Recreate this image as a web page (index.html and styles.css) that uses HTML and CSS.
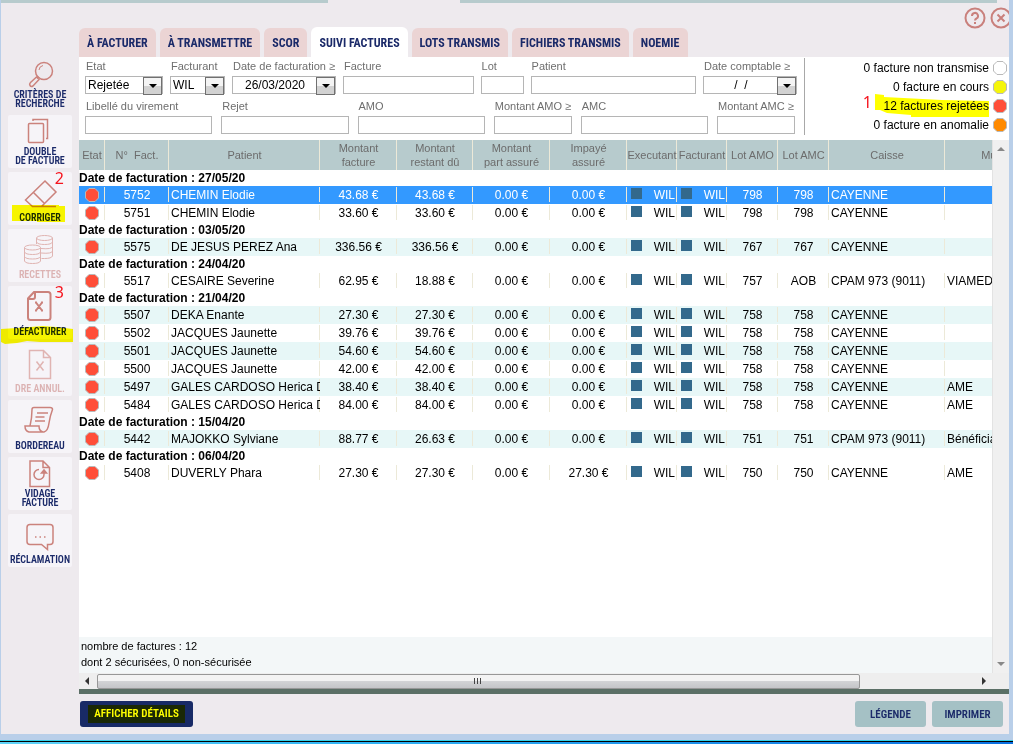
FILE: index.html
```html
<!DOCTYPE html>
<html lang="fr">
<head>
    <meta charset="UTF-8">
    <meta name="viewport" content="width=device-width, initial-scale=1.0">
    <title>Suivi factures</title>
    <link rel="stylesheet" href="styles.css">
</head>
<body>
    <!-- Pastille d'état -->
    <svg class="defs" width="0" height="0">
        <symbol id="pastille" viewBox="0 0 14 14">
            <path d="M4 .5h6L13.500 4v6L10 13.500H4L.5 10V4z" stroke="#b9b9b9" stroke-width="1"/>
        </symbol>
    </svg>

    <div class="window">
        <div class="top-strip"><span class="strip-left"></span><span class="strip-right"></span></div>

        <div class="header">
            <nav class="tabs">
                <button class="tab">À FACTURER</button>
                <button class="tab">À TRANSMETTRE</button>
                <button class="tab">SCOR</button>
                <button class="tab active">SUIVI FACTURES</button>
                <button class="tab">LOTS TRANSMIS</button>
                <button class="tab">FICHIERS TRANSMIS</button>
                <button class="tab">NOEMIE</button>
            </nav>
            <div class="window-actions">
                <button class="round-btn" aria-label="Aide">
                    <svg width="22" height="22" viewBox="0 0 22 22"><circle cx="11" cy="11" r="9.500"/><path d="M8 9a3 3 0 1 1 4.500 2.500Q11 12.300 11 13.500M11 15v2"/></svg>
                </button>
                <button class="round-btn" aria-label="Fermer">
                    <svg width="22" height="22" viewBox="0 0 22 22"><circle cx="11" cy="11" r="9.500"/><path d="M7.500 7.500l7 7M14.500 7.500l-7 7"/></svg>
                </button>
            </div>
        </div>

        <div class="main">
            <!-- MENU LATERAL -->
            <aside class="sidebar">
                <button class="side-btn plain">
                    <svg viewBox="0 0 64 32"><circle cx="36" cy="13" r="8.500"/><path d="M31 12a5 5 0 0 1 4-4.500" stroke-width="1"/><path d="M29.500 18.500l1.500 1.500M28.500 19l2.500 2.500-6 6.500q-2 1-3-.5t.5-3z"/></svg>
                    <span>CRITÈRES DE<br>RECHERCHE</span>
                </button>
                <button class="side-btn">
                    <svg viewBox="0 0 64 32"><rect x="20.500" y="8.500" width="15" height="19" rx="1"/><path d="M25 6V4.500h14.500v19H38"/></svg>
                    <span>DOUBLE<br>DE FACTURE</span>
                </button>
                <button class="side-btn">
                    <svg viewBox="0 0 64 32"><path d="M37 4l11 11-14.500 14.500h-9L17.500 23zM25.500 15.500l11 11M24 29.500h24"/></svg>
                    <span>CORRIGER</span>
                    <svg class="mark mark-corriger" viewBox="0 0 53 18"><path d="M0 0h47v1h6v16H25v-1H0z"/></svg>
                    <b class="note">2</b>
                </button>
                <button class="side-btn disabled">
                    <svg viewBox="0 0 64 32"><g stroke-width="1"><ellipse cx="36.500" cy="4" rx="8" ry="2.500"/><path d="M28.500 4v6M44.500 4v18q-1 2.500-8 2.500h-3M28.500 8q1 2.500 8 2.500t8-2.500M33 14.500q11 1 11.500-2M33 19q11 1 11.500-2"/><ellipse cx="24.500" cy="13.500" rx="8" ry="2.500"/><path d="M16.500 13.500V27q1 2.500 8 2.500t8-2.500V13.500M16.500 18q1 2.500 8 2.500t8-2.500M16.500 22.500q1 2.500 8 2.500t8-2.500"/></g></svg>
                    <span>RECETTES</span>
                </button>
                <button class="side-btn">
                    <svg viewBox="0 0 64 32"><path stroke-width="2" d="M26 1h14q2.500 0 2.500 2.500v23q0 2.500-2.500 2.500H22.500Q20 29 20 26.500V7.500zM27 1v5q0 2-2 2h-5"/><path stroke-width="2" d="M28 11.500l6 8M34 11.500l-6 8M27 11.500h2M33 11.500h2M27 19.500h2M33 19.500h2"/></svg>
                    <span>DÉFACTURER</span>
                    <svg class="mark mark-defacturer" viewBox="0 0 72 18"><path d="M0 3l16-1 26-2 13 1 17 2v13H39l-13-1-10 2-12 1-4-2z"/></svg>
                    <b class="note">3</b>
                </button>
                <button class="side-btn disabled">
                    <svg viewBox="0 0 64 32"><path d="M21.500 2.500h14l7 7v21h-21zM35.500 2.500v7h7M28.500 13.500l7 9M35.500 13.500l-7 9"/></svg>
                    <span>DRE ANNUL.</span>
                </button>
                <button class="side-btn">
                    <svg viewBox="0 0 64 32"><path d="M24 4.500q0-2 2-2h16q2.500 0 2.500 2Q42 11 41 18q-1 8-5 9H21q-4-1-4-6h14q0 5 4 6M24 4.500q0 8-2 16.500M29 8h11M27.500 12h9M27 16h10"/></svg>
                    <span>BORDEREAU</span>
                </button>
                <button class="side-btn">
                    <svg viewBox="0 0 64 32"><path d="M22 4h13l6.500 6.500V29.500H22zM35 4v6.500h6.500"/><path d="M31 12.500a5 5 0 1 0 5 5V14M33.500 16l2.500-3 2.500 3z"/></svg>
                    <span>VIDAGE<br>FACTURE</span>
                </button>
                <button class="side-btn">
                    <svg viewBox="0 0 64 32"><path d="M22 5.500h20q3 0 3 3v14q0 3-3 3h-2.500v5l-6-5H22q-3 0-3-3v-14q0-3 3-3z"/><path d="M27 18h1.500M31.500 18H33M36 18h1.500"/></svg>
                    <span>RÉCLAMATION</span>
                </button>
            </aside>

            <div class="content">
                <div class="panel">
                    <!-- FILTRES -->
                    <div class="filters">
                        <form class="fields">
                            <div class="field-row row-one">
                                <div class="field">
                                    <label for="etat">Etat</label>
                                    <div class="combo"><select id="etat"><option>Rejetée</option></select></div>
                                </div>
                                <div class="field">
                                    <label for="facturant">Facturant</label>
                                    <div class="combo"><select id="facturant"><option>WIL</option></select></div>
                                </div>
                                <div class="field">
                                    <label for="dateFact">Date de facturation ≥</label>
                                    <div class="combo date"><input type="text" id="dateFact" value="26/03/2020"></div>
                                </div>
                                <div class="field">
                                    <label for="facture">Facture</label>
                                    <input type="text" id="facture">
                                </div>
                                <div class="field">
                                    <label for="lot">Lot</label>
                                    <input type="text" id="lot">
                                </div>
                                <div class="field">
                                    <label for="patient">Patient</label>
                                    <input type="text" id="patient">
                                </div>
                                <div class="field">
                                    <label for="dateCompta">Date comptable ≥</label>
                                    <div class="combo date"><input type="text" id="dateCompta" value="/  /"></div>
                                </div>
                            </div>
                            <div class="field-row row-two">
                                <div class="field">
                                    <label for="libelle">Libellé du virement</label>
                                    <input type="text" id="libelle">
                                </div>
                                <div class="field">
                                    <label for="rejet">Rejet</label>
                                    <input type="text" id="rejet">
                                </div>
                                <div class="field">
                                    <label for="amo">AMO</label>
                                    <input type="text" id="amo">
                                </div>
                                <div class="field">
                                    <label for="montantAmo">Montant AMO ≥</label>
                                    <input type="text" id="montantAmo">
                                </div>
                                <div class="field">
                                    <label for="amc">AMC</label>
                                    <input type="text" id="amc">
                                </div>
                                <div class="field">
                                    <label for="montantAmc">Montant AMC ≥</label>
                                    <input type="text" id="montantAmc">
                                </div>
                            </div>
                        </form>
                        <ul class="status">
                            <li>0 facture non transmise <svg class="dot white"><use href="#pastille"/></svg></li>
                            <li>0 facture en cours <svg class="dot yellow"><use href="#pastille"/></svg></li>
                            <li>
                                <svg class="mark mark-rejetees" viewBox="0 0 114 24"><path d="M0 0l9 1v2l58 3 47 1v16H36v-2l-24-2-7-3H0z"/></svg>
                                <b class="note">1</b>
                                <span class="above">12 factures rejetées</span> <svg class="dot red"><use href="#pastille"/></svg>
                            </li>
                            <li>0 facture en anomalie <svg class="dot orange"><use href="#pastille"/></svg></li>
                        </ul>
                    </div>

                    <!-- TABLEAU DES FACTURES -->
                    <div class="list">
                        <div class="list-body">
                            <div class="table-wrap">
                                <table>
                                    <colgroup>
                                        <col class="c-etat"><col class="c-num"><col class="c-patient">
                                        <col class="c-montant"><col class="c-restant"><col class="c-montant"><col class="c-montant">
                                        <col class="c-code"><col class="c-code"><col class="c-lot"><col class="c-lot">
                                        <col class="c-caisse"><col class="c-mutuelle">
                                    </colgroup>
                                    <thead>
                                        <tr>
                                            <th>Etat</th><th>N°&nbsp; Fact.</th><th>Patient</th><th>Montant<br>facture</th><th>Montant<br>restant dû</th><th>Montant<br>part assuré</th><th>Impayé<br>assuré</th><th>Executant</th><th>Facturant</th><th>Lot AMO</th><th>Lot AMC</th><th>Caisse</th><th>Mutuelle</th>
                                        </tr>
                                    </thead>
                                    <tbody>
                                        <tr class="group"><td colspan="13">Date de facturation : 27/05/20</td></tr>
                                        <tr class="selected"><td><svg class="dot red"><use href="#pastille"/></svg></td><td>5752</td><td class="txt">CHEMIN Elodie</td><td>43.68 €</td><td>43.68 €</td><td>0.00 €</td><td>0.00 €</td><td class="code"><i></i>WIL</td><td class="code"><i></i>WIL</td><td>798</td><td>798</td><td class="txt">CAYENNE</td><td class="txt"></td></tr>
                                        <tr><td><svg class="dot red"><use href="#pastille"/></svg></td><td>5751</td><td class="txt">CHEMIN Elodie</td><td>33.60 €</td><td>33.60 €</td><td>0.00 €</td><td>0.00 €</td><td class="code"><i></i>WIL</td><td class="code"><i></i>WIL</td><td>798</td><td>798</td><td class="txt">CAYENNE</td><td class="txt"></td></tr>
                                        <tr class="group"><td colspan="13">Date de facturation : 03/05/20</td></tr>
                                        <tr class="alt"><td><svg class="dot red"><use href="#pastille"/></svg></td><td>5575</td><td class="txt">DE JESUS PEREZ Ana</td><td>336.56 €</td><td>336.56 €</td><td>0.00 €</td><td>0.00 €</td><td class="code"><i></i>WIL</td><td class="code"><i></i>WIL</td><td>767</td><td>767</td><td class="txt">CAYENNE</td><td class="txt"></td></tr>
                                        <tr class="group"><td colspan="13">Date de facturation : 24/04/20</td></tr>
                                        <tr><td><svg class="dot red"><use href="#pastille"/></svg></td><td>5517</td><td class="txt">CESAIRE Severine</td><td>62.95 €</td><td>18.88 €</td><td>0.00 €</td><td>0.00 €</td><td class="code"><i></i>WIL</td><td class="code"><i></i>WIL</td><td>757</td><td>AOB</td><td class="txt">CPAM 973 (9011)</td><td class="txt">VIAMEDIS</td></tr>
                                        <tr class="group"><td colspan="13">Date de facturation : 21/04/20</td></tr>
                                        <tr class="alt"><td><svg class="dot red"><use href="#pastille"/></svg></td><td>5507</td><td class="txt">DEKA Enante</td><td>27.30 €</td><td>27.30 €</td><td>0.00 €</td><td>0.00 €</td><td class="code"><i></i>WIL</td><td class="code"><i></i>WIL</td><td>758</td><td>758</td><td class="txt">CAYENNE</td><td class="txt"></td></tr>
                                        <tr><td><svg class="dot red"><use href="#pastille"/></svg></td><td>5502</td><td class="txt">JACQUES Jaunette</td><td>39.76 €</td><td>39.76 €</td><td>0.00 €</td><td>0.00 €</td><td class="code"><i></i>WIL</td><td class="code"><i></i>WIL</td><td>758</td><td>758</td><td class="txt">CAYENNE</td><td class="txt"></td></tr>
                                        <tr class="alt"><td><svg class="dot red"><use href="#pastille"/></svg></td><td>5501</td><td class="txt">JACQUES Jaunette</td><td>54.60 €</td><td>54.60 €</td><td>0.00 €</td><td>0.00 €</td><td class="code"><i></i>WIL</td><td class="code"><i></i>WIL</td><td>758</td><td>758</td><td class="txt">CAYENNE</td><td class="txt"></td></tr>
                                        <tr><td><svg class="dot red"><use href="#pastille"/></svg></td><td>5500</td><td class="txt">JACQUES Jaunette</td><td>42.00 €</td><td>42.00 €</td><td>0.00 €</td><td>0.00 €</td><td class="code"><i></i>WIL</td><td class="code"><i></i>WIL</td><td>758</td><td>758</td><td class="txt">CAYENNE</td><td class="txt"></td></tr>
                                        <tr class="alt"><td><svg class="dot red"><use href="#pastille"/></svg></td><td>5497</td><td class="txt">GALES CARDOSO Herica D</td><td>38.40 €</td><td>38.40 €</td><td>0.00 €</td><td>0.00 €</td><td class="code"><i></i>WIL</td><td class="code"><i></i>WIL</td><td>758</td><td>758</td><td class="txt">CAYENNE</td><td class="txt">AME</td></tr>
                                        <tr><td><svg class="dot red"><use href="#pastille"/></svg></td><td>5484</td><td class="txt">GALES CARDOSO Herica D</td><td>84.00 €</td><td>84.00 €</td><td>0.00 €</td><td>0.00 €</td><td class="code"><i></i>WIL</td><td class="code"><i></i>WIL</td><td>758</td><td>758</td><td class="txt">CAYENNE</td><td class="txt">AME</td></tr>
                                        <tr class="group"><td colspan="13">Date de facturation : 15/04/20</td></tr>
                                        <tr class="alt"><td><svg class="dot red"><use href="#pastille"/></svg></td><td>5442</td><td class="txt">MAJOKKO Sylviane</td><td>88.77 €</td><td>26.63 €</td><td>0.00 €</td><td>0.00 €</td><td class="code"><i></i>WIL</td><td class="code"><i></i>WIL</td><td>751</td><td>751</td><td class="txt">CPAM 973 (9011)</td><td class="txt">Bénéficiaire</td></tr>
                                        <tr class="group"><td colspan="13">Date de facturation : 06/04/20</td></tr>
                                        <tr><td><svg class="dot red"><use href="#pastille"/></svg></td><td>5408</td><td class="txt">DUVERLY Phara</td><td>27.30 €</td><td>27.30 €</td><td>0.00 €</td><td>27.30 €</td><td class="code"><i></i>WIL</td><td class="code"><i></i>WIL</td><td>750</td><td>750</td><td class="txt">CAYENNE</td><td class="txt">AME</td></tr>
                                    </tbody>
                                </table>
                            </div>
                            <div class="summary">
                                nombre de factures : 12<br>
                                dont 2 sécurisées, 0 non-sécurisée
                            </div>
                        </div>
                        <div class="scroll-v"><span class="arrow up"></span><span class="arrow down"></span></div>
                    </div>
                    <div class="scroll-h">
                        <span class="arrow left"></span>
                        <div class="track"><div class="thumb"><i></i><i></i><i></i></div></div>
                        <span class="arrow right"></span>
                    </div>
                </div>

                <div class="footer">
                    <button class="btn primary"><span>AFFICHER DÉTAILS</span></button>
                    <button class="btn push">LÉGENDE</button>
                    <button class="btn">IMPRIMER</button>
                </div>
            </div>
        </div>
    </div>
    <div class="taskbar"></div>
</body>
</html>
```
FILE: styles.css
```css
* {
    box-sizing: border-box;
}

body {
    margin: 0;
    min-height: 100vh;
    display: flex;
    flex-direction: column;
    font-family: "Liberation Sans", Arial, sans-serif;
    font-size: 12px;
    color: #000;
    background: #b9cfe9;
}

button {
    font-family: "Roboto Condensed", Roboto, sans-serif;
    font-weight: bold;
    color: #1b2a69;
    border: none;
    margin: 0;
    padding: 0;
    white-space: nowrap;
    cursor: pointer;
}

.defs {
    position: absolute;
}

.window {
    flex: 1;
    display: flex;
    flex-direction: column;
    margin: 0 4px 6px 1px;
    background: #eeeaee;
    overflow: hidden;
}

.taskbar {
    height: 4px;
    border-top: 1px solid #35d0e8;
    background: linear-gradient(#000 1px, transparent 1px), linear-gradient(90deg, #5fd4f8, #2fb4f5 35%, #0a6fe0);
}

.top-strip {
    display: flex;
    justify-content: space-between;
    height: 3px;
    padding-right: 12px;
}

.strip-left {
    width: 327px;
    background: #b7cbcd;
}

.strip-right {
    flex: 1;
    margin-left: 132px;
    background: #b7cbcd;
}

/* Onglets */
.header {
    display: flex;
    justify-content: space-between;
    height: 54px;
    padding-left: 78px;
}

.tabs {
    display: flex;
    align-items: flex-end;
    gap: 4px;
}

.tab {
    height: 29px;
    padding: 0 8px;
    font-size: 12px;
    background: #ebd4d4;
    border-radius: 6px 6px 0 0;
}

.tab.active {
    height: 30px;
    padding-top: 1px;
    background: #fff;
}

.window-actions {
    display: flex;
    gap: 4px;
    margin: 4px -3px 0 0;
}

.round-btn {
    width: 22px;
    height: 22px;
    background: none;
}

.round-btn svg {
    display: block;
    fill: none;
    stroke: #c9807c;
    stroke-width: 2;
}

.main {
    flex: 1;
    display: flex;
}

/* Menu lateral */
.sidebar {
    width: 78px;
    padding: 1px 7px 0;
    display: flex;
    flex-direction: column;
    gap: 4px;
}

.side-btn {
    position: relative;
    display: flex;
    flex-direction: column;
    align-items: center;
    height: 53px;
    padding-bottom: 3px;
    font-size: 10px;
    font-weight: 600;
    line-height: 9px;
    background: #f6f4f8;
    border-radius: 2px;
}

.side-btn > svg:first-child {
    width: 64px;
    height: 32px;
    margin: auto 0;
    fill: none;
    stroke: #cb827c;
    stroke-width: 1.5;
}

.side-btn.plain {
    background: none;
}

.side-btn.disabled {
    color: #dcb3b3;
}

.side-btn.disabled > svg:first-child {
    stroke: #e0b4b2;
}

/* Surlignages et annotations */
.mark {
    position: absolute;
    fill: #ff0;
    mix-blend-mode: multiply;
}

.mark-corriger {
    left: 4px;
    top: 33px;
    width: 53px;
    height: 18px;
}

.mark-defacturer {
    left: -7px;
    top: 40px;
    width: 72px;
    height: 18px;
    z-index: 1;
}

.mark-rejetees {
    right: 18px;
    top: -2px;
    width: 114px;
    height: 24px;
}

.note {
    position: absolute;
    right: 8px;
    top: -2px;
    font: 16px/16px "Noto Sans", sans-serif;
    color: #f5141e;
}

.status .note {
    right: 135px;
}

/* Contenu */
.content {
    flex: 1;
    min-width: 0;
    display: flex;
    flex-direction: column;
}

.panel {
    flex: 1;
    display: flex;
    flex-direction: column;
    background: #fff;
    border-bottom: 5px solid #5b6f66;
}

.filters {
    display: flex;
    height: 83px;
}

.fields {
    flex: 1;
    padding: 0 7px 0 6px;
}

.field-row {
    display: grid;
    height: 40px;
}

.row-one {
    grid-template-columns: 78px 55px 104px 131fr 43px 166fr 94px;
    gap: 7px;
}

.row-two {
    grid-template-columns: 127fr 127fr 127fr 78px 127fr 78px;
    gap: 9px;
    padding-right: 2px;
}

.field {
    min-width: 0;
}

.field label {
    display: block;
    height: 19px;
    padding-left: 1px;
    font-size: 11px;
    line-height: 19px;
    color: #6e6e6e;
    white-space: nowrap;
}

.field input,
.field select {
    display: block;
    width: 100%;
    height: 18px;
    margin: 0;
    padding: 0 2px;
    border: 1px solid #b5b5b5;
    border-radius: 0;
    background: #fff;
    color: #000;
    font-family: inherit;
    font-size: 12px;
    appearance: none;
}

.combo {
    position: relative;
}

.combo::before {
    content: "";
    position: absolute;
    right: 1px;
    top: 1px;
    width: 17px;
    height: 16px;
    border: 1px solid #707070;
    background: linear-gradient(#f4f4f4 50%, #d2d2d2 50%);
}

.combo::after {
    content: "";
    position: absolute;
    right: 6px;
    top: 8px;
    border: 4px solid transparent;
    border-top-color: #000;
    border-bottom: none;
}

.combo.date input {
    padding-right: 20px;
    text-align: center;
    white-space: pre;
}

.status {
    width: 205px;
    margin: 1px 0 5px;
    padding: 0 2px 0 0;
    list-style: none;
    border-left: 1px solid #a8a8a8;
}

.status li {
    position: relative;
    display: flex;
    justify-content: flex-end;
    align-items: center;
    gap: 4px;
    height: 19px;
    white-space: nowrap;
}

.above {
    position: relative;
}

.dot {
    width: 14px;
    height: 14px;
}

.white { fill: #fff; }
.yellow { fill: #f5f50a; }
.red { fill: #ff4e38; }
.orange { fill: #ff8a00; }

/* Tableau */
.list {
    flex: 1;
    display: flex;
    min-height: 0;
}

.list-body {
    flex: 1;
    min-width: 0;
    display: flex;
    flex-direction: column;
}

.table-wrap {
    flex: 1;
    overflow: hidden;
}

table {
    table-layout: fixed;
    width: 100%;
    min-width: 980px;
    border-collapse: collapse;
}

.c-etat { width: 26px; }
.c-num { width: 64px; }
.c-patient { width: 151px; }
.c-montant { width: 77px; }
.c-restant { width: 76px; }
.c-code { width: 50px; }
.c-lot { width: 51px; }
.c-caisse { width: 116px; }
.c-mutuelle { width: 114px; }

th {
    height: 30px;
    padding: 0;
    font-size: 11px;
    font-weight: normal;
    line-height: 14px;
    color: #6c6c6c;
    white-space: nowrap;
    background: linear-gradient(#ece9d8, #ece9d8) right top / 1px 100% no-repeat #b7cbcd;
}

td {
    height: 18px;
    padding: 0;
    line-height: 18px;
    text-align: center;
    white-space: nowrap;
    overflow: hidden;
    background: linear-gradient(#ece9d8, #ece9d8) right 1px / 1px 15px no-repeat;
}

td .dot {
    display: block;
    margin: 0 auto;
}

td.txt {
    padding-left: 2px;
    text-align: left;
}

td.code {
    padding: 0 2px 0 4px;
    text-align: right;
}

td.code i {
    float: left;
    width: 11px;
    height: 11px;
    margin-top: 2px;
    background: #33698c;
}

tr.alt {
    background: #e7f7f7;
}

tr.selected {
    color: #fff;
    background: #3399ff;
}

tr.group td {
    height: 16px;
    line-height: 16px;
    font-weight: bold;
    text-align: left;
    background: none;
}

.summary {
    height: 36px;
    padding: 1px 2px;
    font-size: 11px;
    line-height: 16px;
    background: #f3f7f8;
}

/* Barres de defilement */
.scroll-v {
    display: flex;
    flex-direction: column;
    justify-content: space-between;
    align-items: center;
    width: 17px;
    padding: 7px 0;
    background: #f0f0f0;
    border-left: 1px solid #e3e3e3;
}

.scroll-h {
    display: flex;
    align-items: center;
    height: 16px;
    padding: 0 23px 0 6px;
    background: #eee;
}

.track {
    flex: 1;
    margin: 0 8px;
}

.thumb {
    display: flex;
    justify-content: center;
    align-items: center;
    gap: 1px;
    width: 87%;
    height: 15px;
    border: 1px solid #979797;
    border-radius: 2px;
    background: linear-gradient(#f3f3f3 45%, #d2d3d5 50%, #c4c5c8);
}

.thumb i {
    width: 2px;
    height: 6px;
    border-left: 1px solid #444;
}

.arrow {
    border: 4px solid transparent;
}

.arrow.up {
    border-top: none;
    border-bottom-color: #888;
}

.arrow.down {
    border-bottom: none;
    border-top-color: #888;
}

.arrow.left {
    border-left: none;
    border-right-color: #333;
}

.arrow.right {
    border-right: none;
    border-left-color: #333;
}

.footer {
    display: flex;
    gap: 6px;
    height: 40px;
    padding: 7px 6px 7px 1px;
}

.btn {
    width: 71px;
    font-size: 11px;
    font-weight: 600;
    background: #a5c1c5;
    border-radius: 3px;
}

.btn.push {
    margin-left: auto;
}

.btn.primary {
    width: 113px;
    color: #ff0;
    background: #182a66;
}

.primary span {
    display: inline-block;
    padding: 0 6px;
    line-height: 18px;
    background: #1a2805;
}
```
